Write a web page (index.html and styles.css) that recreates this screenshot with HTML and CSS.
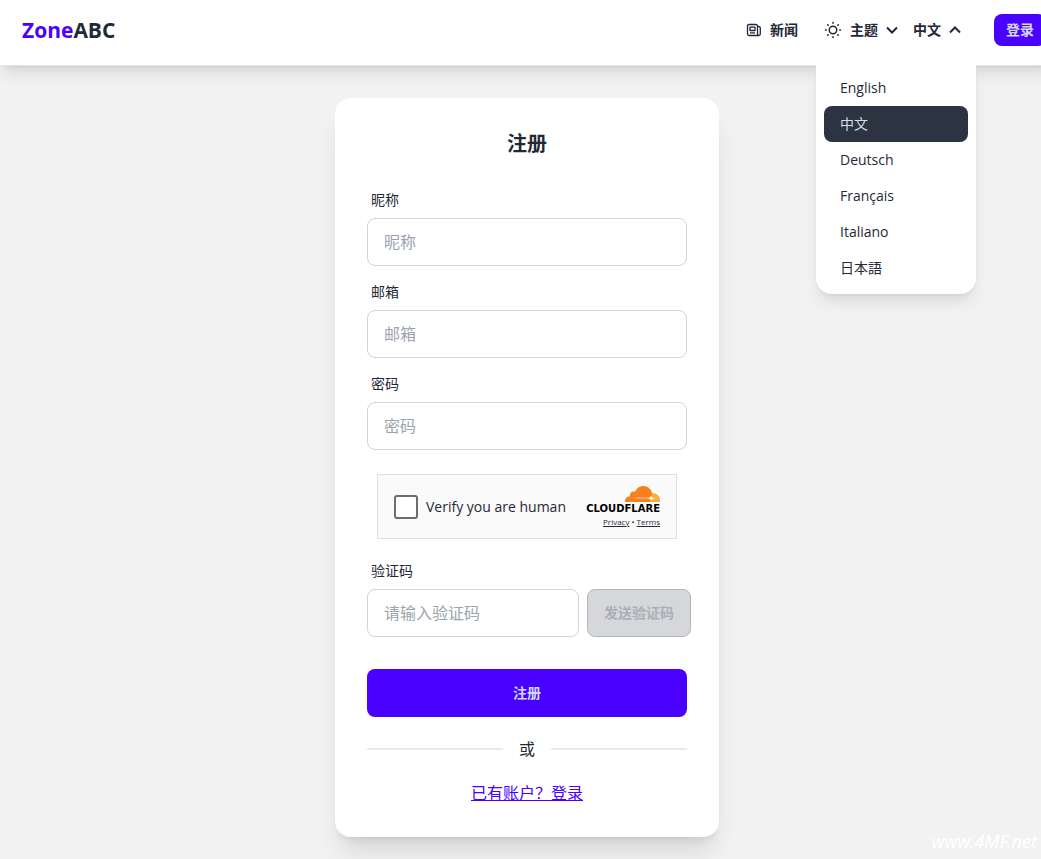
FILE: index.html
```html
<!DOCTYPE html>
<html lang="zh">
<head>
  <meta charset="UTF-8">
  <title>注册 - ZoneABC</title>
  <meta name="viewport" content="width=device-width, initial-scale=1.0">
  <link rel="stylesheet" href="styles.css">
</head>
<body>
  <header class="navbar">
    <a class="logo" href="#"><span class="logo-accent">Zone</span>ABC</a>

    <nav class="nav-actions">
      <a class="nav-item news-link" href="#">
        <svg width="16" height="16" viewBox="0 0 16 16" fill="none" stroke="currentColor" stroke-linejoin="round" aria-hidden="true">
          <path stroke-width="1.300" d="M11.500 4.500h1.300a1.500 1.500 0 0 1 1.500 1.500v6a1.400 1.400 0 0 1-2.800 0V4A1.500 1.500 0 0 0 10 2.500H3A1.500 1.500 0 0 0 1.500 4v8A1.500 1.500 0 0 0 3 13.500h10"/>
          <path stroke-width="1.300" d="M4 5.200h5v3.300H4zM4 10.800h5"/>
        </svg>
        新闻
      </a>

      <button class="nav-item theme-btn" type="button">
        <svg width="18" height="18" viewBox="0 0 24 24" fill="none" stroke="currentColor" stroke-width="2" stroke-linecap="round" aria-hidden="true">
          <circle cx="12" cy="12" r="5"/>
          <path d="M12 2v1M12 21v1M2 12h1M21 12h1M4.900 4.900l.7.7M18.400 18.400l.7.7M4.900 19.100l.7-.7M18.400 5.600l.7-.7"/>
        </svg>
        <span class="with-arrow">主题
          <svg width="14" height="14" viewBox="0 0 14 14" fill="none" stroke="currentColor" stroke-width="2" aria-hidden="true"><path d="M2 4.500l5 5 5-5"/></svg>
        </span>
      </button>

      <div class="lang">
        <button class="nav-item lang-btn" type="button" aria-expanded="true">
          <span class="with-arrow">中文
            <svg width="14" height="14" viewBox="0 0 14 14" fill="none" stroke="currentColor" stroke-width="2" aria-hidden="true"><path d="M2 9.500l5-5 5 5"/></svg>
          </span>
        </button>
        <ul class="lang-menu">
          <li><a href="#">English</a></li>
          <li><a class="active" href="#">中文</a></li>
          <li><a href="#">Deutsch</a></li>
          <li><a href="#">Français</a></li>
          <li><a href="#">Italiano</a></li>
          <li><a href="#" lang="ja">日本語</a></li>
        </ul>
      </div>

      <a class="login-btn" href="#">登录</a>
    </nav>
  </header>

  <main class="page">
    <form class="card">
      <h1>注册</h1>

      <div class="field">
        <label for="nickname">昵称</label>
        <input type="text" id="nickname" placeholder="昵称">
      </div>
      <div class="field">
        <label for="email">邮箱</label>
        <input type="email" id="email" placeholder="邮箱">
      </div>
      <div class="field">
        <label for="password">密码</label>
        <input type="password" id="password" placeholder="密码">
      </div>

      <!-- Captcha -->
      <div class="captcha">
        <input type="checkbox" id="human">
        <label for="human">Verify you are human</label>
        <div class="captcha-brand">
          <svg width="36" height="16" viewBox="0 0 36 16" aria-hidden="true">
            <path fill="#fbad41" d="M27.500 7c4.500-.5 8.500 2.500 8.500 7.500V16H24z"/>
            <path fill="#f6821f" d="M1 16c-.3-3 1.500-5.500 5-5.700C5.500 7 8 4.700 11.200 5.800 12.500 2.200 15.500 0 19.300 0c4.700 0 8.200 3.200 8.900 7.500L26.500 16z"/>
            <path fill="#fbc08a" d="M10 11.600h15v1H10z"/>
            <path fill="#fff" d="M27 9.500l.9 2 3.600.7-3.600.8-.9 2-.9-2-2.600-.8 2.600-.7z"/>
          </svg>
          <strong>CLOUDFLARE</strong>
          <div class="captcha-links"><a href="#">Privacy</a> • <a href="#">Terms</a></div>
        </div>
      </div>

      <div class="field">
        <label for="code">验证码</label>
        <div class="code-row">
          <input type="text" id="code" placeholder="请输入验证码">
          <button class="send-btn" type="button" disabled>发送验证码</button>
        </div>
      </div>

      <button class="submit-btn" type="submit">注册</button>
      <div class="divider">或</div>
      <a class="login-link" href="#">已有账户？登录</a>
    </form>
  </main>

  <div class="watermark">www.4MF.net</div>
</body>
</html>
```

FILE: styles.css
```css
* {
  box-sizing: border-box;
  margin: 0;
  padding: 0;
}
html {
  overflow-x: hidden;
}
body {
  min-width: 1054px;
  min-height: 100vh;
  background: #f2f2f2;
  color: #1f2937;
  font-family: "Open Sans", "Noto Sans CJK SC", sans-serif;
  font-size: 16px;
  line-height: 24px;
}
a {
  color: inherit;
  text-decoration: none;
}
button,
input {
  font: inherit;
  color: inherit;
}
svg {
  display: block;
  flex-shrink: 0;
}

/* Navbar */
.navbar {
  position: relative;
  z-index: 10;
  display: flex;
  align-items: center;
  justify-content: space-between;
  height: 66px;
  padding: 0 8px 6px 22px;
  background: #fff;
  border-bottom: 1px solid #e5e5e5;
  box-shadow: 0 10px 15px -3px rgba(0, 0, 0, 0.1), 0 4px 6px -4px rgba(0, 0, 0, 0.1);
}
.logo {
  font-size: 21px;
  font-weight: 700;
  line-height: 28px;
}
.logo-accent {
  color: #4a00ff;
}
.nav-actions {
  display: flex;
  align-items: center;
}
.nav-item {
  display: flex;
  align-items: center;
  gap: 8px;
  height: 32px;
  border: none;
  background: none;
  font-size: 14px;
  font-weight: 700;
  line-height: 20px;
  cursor: pointer;
}
.news-link {
  margin-right: 26px;
}
.theme-btn {
  margin-right: 14px;
}
.with-arrow {
  display: flex;
  align-items: center;
  gap: 7px;
}
.lang {
  position: relative;
  margin-right: 18px;
}
.lang-btn {
  padding-right: 14px;
}
.lang-menu {
  position: absolute;
  top: 48px;
  right: 0;
  width: 160px;
  padding: 8px;
  list-style: none;
  background: #fff;
  border-radius: 0 0 16px 16px;
  box-shadow: 0 10px 15px -3px rgba(0, 0, 0, 0.1), 0 4px 6px -4px rgba(0, 0, 0, 0.1);
}
.lang-menu a {
  display: block;
  padding: 8px 16px;
  border-radius: 8px;
  font-size: 14px;
  line-height: 20px;
}
.lang-menu .active {
  background: #2b3440;
  color: #d7dde4;
}
.login-btn {
  padding: 6px 12px;
  border-radius: 8px;
  background: #4a00ff;
  color: #d1dbff;
  font-size: 14px;
  font-weight: 700;
  line-height: 20px;
}

/* Register card */
.page {
  display: flex;
  justify-content: center;
  padding: 32px;
}
.card {
  display: flex;
  flex-direction: column;
  width: 384px;
  padding: 32px;
  background: #fff;
  border-radius: 16px;
  box-shadow: 0 20px 25px -5px rgba(0, 0, 0, 0.1), 0 8px 10px -6px rgba(0, 0, 0, 0.1);
}
.card h1 {
  margin-bottom: 24px;
  font-size: 20px;
  line-height: 28px;
  text-align: center;
}
.field + .field {
  margin-top: 8px;
}
.field label {
  display: block;
  padding: 8px 4px;
  font-size: 14px;
  line-height: 20px;
}
.field input {
  display: block;
  width: 100%;
  height: 48px;
  padding: 0 16px;
  border: 1px solid #d2d4d7;
  border-radius: 8px;
  background: #fff;
}
.field input::placeholder {
  color: #9ca3af;
}

/* Captcha */
.captcha {
  display: flex;
  align-items: center;
  align-self: center;
  width: 300px;
  height: 65px;
  margin: 24px 0 14px;
  padding: 0 16px;
  border: 1px solid #e0e0e0;
  background: #fafafa;
}
.captcha input {
  appearance: none;
  width: 24px;
  height: 24px;
  margin-right: 8px;
  border: 2px solid #6d6d6d;
  border-radius: 3px;
  background: #fff;
}
.captcha label {
  font-size: 14px;
}
.captcha-brand {
  display: flex;
  flex-direction: column;
  align-items: flex-end;
  margin-left: auto;
}
.captcha-brand strong {
  color: #000;
  font-family: "DejaVu Sans", sans-serif;
  font-size: 10px;
  line-height: 14px;
}
.captcha-links {
  font-size: 8px;
  line-height: 12px;
}
.captcha-links a {
  text-decoration: underline;
}

.code-row {
  display: flex;
  gap: 8px;
  margin-right: -4px;
}
.code-row input {
  flex: 1;
  min-width: 0;
}
.send-btn {
  width: 104px;
  border: 1px solid #b4b7bc;
  border-radius: 8px;
  background: #d5d7da;
  color: #abafb5;
  font-size: 14px;
  font-weight: 600;
}
.submit-btn {
  height: 48px;
  margin-top: 32px;
  border: none;
  border-radius: 8px;
  background: #4a00ff;
  color: #d1dbff;
  font-size: 14px;
  font-weight: 700;
  cursor: pointer;
}
.divider {
  display: flex;
  align-items: center;
  gap: 16px;
  margin: 20px 0;
}
.divider::before,
.divider::after {
  content: "";
  flex: 1;
  height: 2px;
  background: #e9eaeb;
}
.login-link {
  align-self: center;
  color: #4a00ff;
  text-decoration: underline;
}

.watermark {
  position: fixed;
  right: 4px;
  bottom: 6px;
  color: #fff;
  font-family: "Noto Sans", sans-serif;
  font-size: 18px;
  font-style: italic;
}
```
